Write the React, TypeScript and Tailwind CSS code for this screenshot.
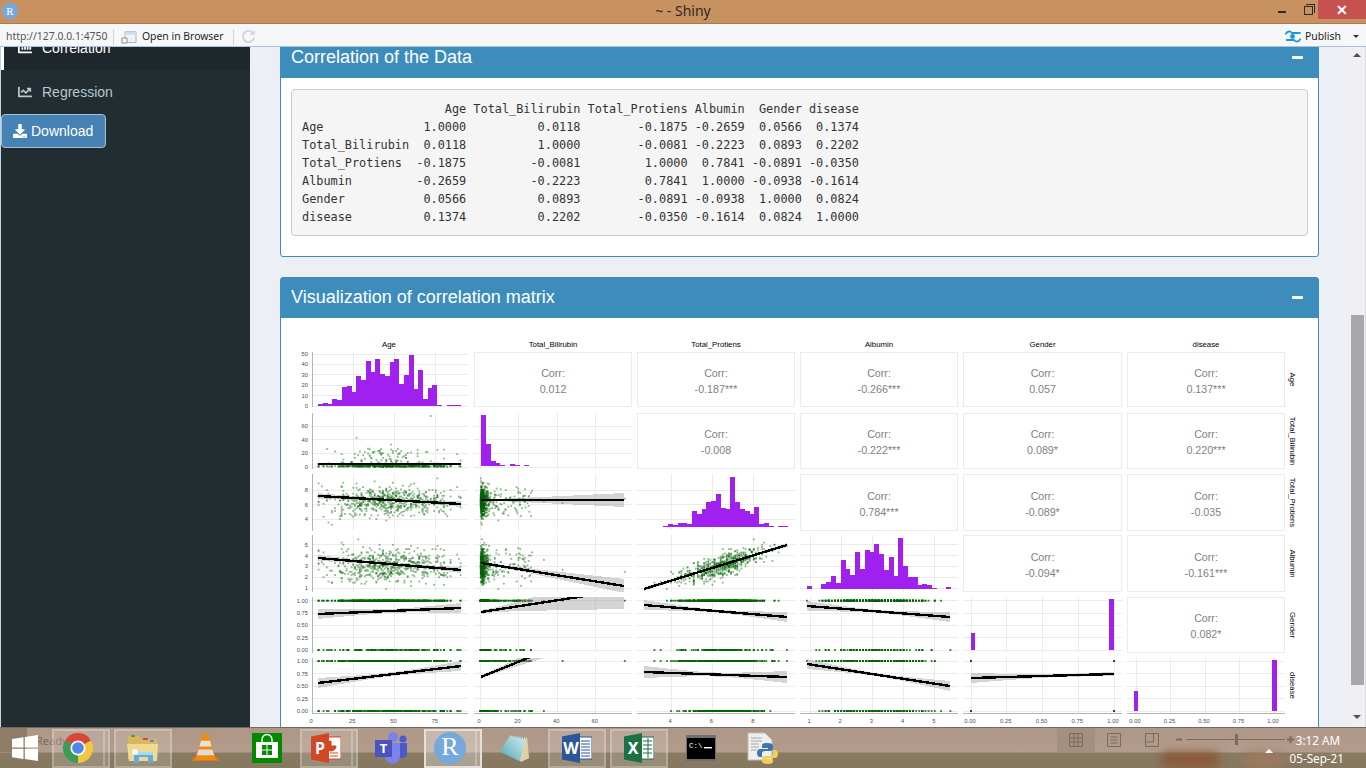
import React from 'react';
import { FaChartBar, FaChartLine, FaDownload } from 'react-icons/fa';

// seeded random so the scatter stays the same between renders
function makeRng(seed: number) {
  let a = seed;
  return () => {
    a = (a + 0x6d2b79f5) | 0;
    let t = Math.imul(a ^ (a >>> 15), 1 | a);
    t = (t + Math.imul(t ^ (t >>> 7), 61 | t)) ^ t;
    return ((t ^ (t >>> 14)) >>> 0) / 4294967296;
  };
}

const rng = makeRng(4750);
const normal = () => Math.sqrt(-2 * Math.log(rng() + 1e-9)) * Math.cos(2 * Math.PI * rng());
const clamp = (v: number, a: number, b: number) => Math.min(b, Math.max(a, v));

const rows: number[][] = [];
for (let i = 0; i < 560; i++) {
  const age = Math.round(clamp(45 + 18 * normal(), 4, 90));
  const spread = rng() < 0.16 ? 3 + rng() * 24 : Math.exp(0.25 + 0.8 * normal());
  const bili = Math.round(clamp(spread, 0.4, 40) * 10) / 10;
  const prot = Math.round(clamp(6.5 + 1.05 * normal(), 2.7, 9.6) * 10) / 10;
  const alb = Math.round(clamp(3.14 + 0.6 * (prot - 6.5) + 0.5 * normal(), 0.9, 5.5) * 10) / 10;
  const gender = rng() < 0.76 ? 1 : 0;
  const disease = rng() < 0.71 ? 1 : 0;
  rows.push([age, bili, prot, alb, gender, disease]);
}
rows.push([72, 75, 6.8, 2.5, 1, 1], [27, 42.8, 6.2, 2.7, 1, 1], [90, 0.7, 7, 3, 1, 1], [28, 1, 8, 5.5, 0, 0]);

type Axis = { lo: number; hi: number; f: (v: number) => number; ticks: [number, string][] };

const cols: Axis[] = [
  { lo: 312, hi: 468, f: (v) => 312 + 1.65 * v, ticks: [[0, '0'], [25, '25'], [50, '50'], [75, '75']] },
  { lo: 474, hi: 632, f: (v) => 480 + 1.93 * v, ticks: [[0, '0'], [20, '20'], [40, '40'], [60, '60']] },
  { lo: 637, hi: 795, f: (v) => 671 + 20.7 * (v - 4), ticks: [[4, '4'], [6, '6'], [8, '8']] },
  { lo: 800, hi: 958, f: (v) => 810 + 31.2 * (v - 1), ticks: [[1, '1'], [2, '2'], [3, '3'], [4, '4'], [5, '5']] },
  { lo: 963, hi: 1122, f: (v) => 971 + 143 * v, ticks: [[0, '0.00'], [0.25, '0.25'], [0.5, '0.50'], [0.75, '0.75'], [1, '1.00']] },
  { lo: 1127, hi: 1285, f: (v) => 1136 + 138 * v, ticks: [[0, '0.00'], [0.25, '0.25'], [0.5, '0.50'], [0.75, '0.75'], [1, '1.00']] },
];

const binTicks: [number, string][] = [[0, '0.00'], [0.25, '0.25'], [0.5, '0.50'], [0.75, '0.75'], [1, '1.00']];

const lines: Axis[] = [
  { lo: 352, hi: 407, f: (v) => 406 - 1.04 * v, ticks: [[0, '0'], [10, '10'], [20, '20'], [30, '30'], [40, '40'], [50, '50']] },
  { lo: 413, hi: 469, f: (v) => 467 - 0.68 * v, ticks: [[0, '0'], [20, '20'], [40, '40'], [60, '60']] },
  { lo: 474, hi: 531, f: (v) => 519 - 7.25 * (v - 4), ticks: [[4, '4'], [6, '6'], [8, '8']] },
  { lo: 535, hi: 592, f: (v) => 588 - 10.8 * (v - 1), ticks: [[1, '1'], [2, '2'], [3, '3'], [4, '4'], [5, '5']] },
  { lo: 597, hi: 653, f: (v) => 650 - 49.3 * v, ticks: binTicks },
  { lo: 658, hi: 713, f: (v) => 711 - 50 * v, ticks: binTicks },
];

const names = ['Age', 'Total_Bilirubin', 'Total_Protiens', 'Albumin', 'Gender', 'disease'];

const corr: Record<string, string> = {
  '1,0': '0.012', '2,0': '-0.187***', '3,0': '-0.266***', '4,0': '0.057', '5,0': '0.137***',
  '2,1': '-0.008', '3,1': '-0.222***', '4,1': '0.089*', '5,1': '0.220***',
  '3,2': '0.784***', '4,2': '-0.089*', '5,2': '-0.035',
  '4,3': '-0.094*', '5,3': '-0.161***',
  '5,4': '0.082*',
};

// col, row, x0, y0, x1, y1, centre of the band, its half width at the centre, left and right
const fits: number[][] = [
  [0, 1, 318, 464, 461, 464, 392, 0.5, 1, 1],
  [0, 2, 318, 496, 461, 504, 392, 1, 3, 3],
  [1, 2, 481, 500, 624, 500, 485, 1, 1, 7],
  [0, 3, 318, 558, 461, 570, 392, 1, 3, 3],
  [1, 3, 481, 563, 624, 586, 485, 1, 1.5, 7],
  [2, 3, 644, 589, 787, 545, 715, 0.6, 2, 2],
  [0, 4, 318, 614, 461, 608, 392, 2, 5, 5],
  [1, 4, 481, 612, 624, 590, 485, 2, 2, 19],
  [2, 4, 644, 605, 787, 617, 715, 1.5, 5, 5],
  [3, 4, 807, 606, 950, 617, 878, 1.5, 5, 5],
  [0, 5, 318, 683, 461, 666, 392, 2, 5, 5],
  [1, 5, 481, 677, 624, 619, 485, 2, 2, 15],
  [2, 5, 644, 672, 787, 677, 715, 2, 6, 6],
  [3, 5, 807, 664, 950, 686, 878, 1.5, 5, 5],
  [4, 5, 971, 678, 1114, 674, 1060, 1.5, 5, 2],
];

const ageBars = [2, 3, 2, 7, 6, 18, 19, 13, 29, 25, 43, 33, 45, 31, 29, 42, 45, 21, 30, 49, 16, 35, 7, 17, 20, 1, 0, 1, 1, 1].map((v) => v * 1.04);
const biliBars = [51, 22, 5, 3, 1, 0, 2, 1, 0, 1];
const protBars = [0, 0, 0, 0, 1, 3, 2, 4, 4, 3, 16, 13, 18, 25, 26, 33, 19, 18, 50, 25, 18, 16, 13, 20, 3, 4, 1, 0, 1, 1];
const albBars = [3, 0, 0, 5, 7, 13, 6, 29, 20, 14, 37, 20, 39, 37, 45, 35, 19, 32, 13, 51, 23, 12, 12, 4, 5, 4, 1, 0, 0, 2];

function Bars({ x, w, bottom, heights }: { x: number; w: number; bottom: number; heights: number[] }) {
  return (
    <g>
      {heights.map((h, i) =>
        h > 0 ? <rect key={i} x={x + i * w} y={bottom - h} width={w + 0.2} height={h} fill="#a020f0" shapeRendering="crispEdges" /> : null
      )}
    </g>
  );
}

function Grid({ c, r }: { c: number; r: number }) {
  const col = cols[c];
  const row = lines[r];
  return (
    <g stroke="#ebebeb" strokeWidth={1} shapeRendering="crispEdges">
      {row.ticks.map(([v]) => (
        <line key={`h${v}`} x1={col.lo} x2={col.hi} y1={row.f(v)} y2={row.f(v)} />
      ))}
      {col.ticks.map(([v]) => (
        <line key={`v${v}`} x1={col.f(v)} x2={col.f(v)} y1={row.lo} y2={row.hi} />
      ))}
    </g>
  );
}

function Fit({ spec }: { spec: number[] }) {
  const [, , x0, y0, x1, y1, cx, m, l, rr] = spec;
  const top: string[] = [];
  const bot: string[] = [];
  for (let i = 0; i <= 24; i++) {
    const x = x0 + ((x1 - x0) * i) / 24;
    const y = y0 + ((y1 - y0) * (x - x0)) / (x1 - x0);
    const edge = x < cx ? l : rr;
    const span = x < cx ? cx - x0 : x1 - cx;
    const t = (x - cx) / span;
    const se = Math.sqrt(m * m + (edge * edge - m * m) * t * t);
    top.push(`${x},${y - se}`);
    bot.unshift(`${x},${y + se}`);
  }
  return (
    <g shapeRendering="crispEdges">
      <polygon points={[...top, ...bot].join(' ')} fill="#999999" fillOpacity={0.42} />
      <line x1={x0} y1={y0} x2={x1} y2={y1} stroke="#000000" strokeWidth={2.4} />
    </g>
  );
}

function Scatter({ c, r }: { c: number; r: number }) {
  return (
    <g fill="#006400" fillOpacity={r >= 4 ? 0.85 : 0.45}>
      {rows.map((d, i) => (
        <rect key={i} x={cols[c].f(d[c]) - 0.9} y={lines[r].f(d[r]) - 0.9} width={1.8} height={1.8} />
      ))}
    </g>
  );
}

function PairsPlot() {
  const cells: React.ReactNode[] = [];
  for (let r = 0; r < 6; r++) {
    for (let c = 0; c < 6; c++) {
      const col = cols[c];
      const row = lines[r];
      const id = `cell-${c}-${r}`;
      if (c > r) {
        const cx = (col.lo + col.hi) / 2;
        const cy = (row.lo + row.hi) / 2;
        cells.push(
          <g key={id}>
            <rect x={col.lo + 0.5} y={row.lo + 0.5} width={col.hi - col.lo - 1} height={row.hi - row.lo - 1} fill="none" stroke="#ebebeb" />
            <text x={cx} y={cy - 3} textAnchor="middle" fontSize={10.7} fill="#7f7f7f">Corr:</text>
            <text x={cx} y={cy + 13} textAnchor="middle" fontSize={10.7} fill="#7f7f7f">{corr[`${c},${r}`]}</text>
          </g>
        );
        continue;
      }
      cells.push(
        <g key={id} clipPath={`url(#${id})`}>
          <clipPath id={id}>
            <rect x={col.lo} y={row.lo} width={col.hi - col.lo} height={row.hi - row.lo} />
          </clipPath>
          <Grid c={c} r={r} />
          {c < r && !(c === 4 && r === 5) && <Scatter c={c} r={r} />}
          {c === 4 && r === 5 && (
            <g fill="#006400">
              <rect x={970} y={660} width={2} height={2} />
              <rect x={1113} y={660} width={2} height={2} />
              <rect x={970} y={710} width={2} height={2} />
              <rect x={1113} y={710} width={2} height={2} />
            </g>
          )}
          {c === 0 && r === 0 && <Bars x={318} w={4.77} bottom={406} heights={ageBars} />}
          {c === 1 && r === 1 && <Bars x={481} w={4.8} bottom={466} heights={biliBars} />}
          {c === 2 && r === 2 && <Bars x={644} w={4.8} bottom={527} heights={protBars} />}
          {c === 3 && r === 3 && <Bars x={807} w={4.8} bottom={589} heights={albBars} />}
          {c === 4 && r === 4 && (
            <g fill="#a020f0">
              <rect x={971} y={633} width={4} height={17} />
              <rect x={1109} y={599} width={5} height={51} />
            </g>
          )}
          {c === 5 && r === 5 && (
            <g fill="#a020f0">
              <rect x={1134} y={691} width={4} height={20} />
              <rect x={1272} y={660} width={5} height={51} />
            </g>
          )}
          {fits.filter((f) => f[0] === c && f[1] === r).map((f, i) => <Fit key={i} spec={f} />)}
        </g>
      );
    }
  }

  return (
    <svg viewBox="281 318 1037 420" width={1037} height={420} className="block">
      {cells}
      {lines.map((row, r) => (
        <g key={r}>
          <line x1={312} x2={312} y1={row.lo} y2={row.hi} stroke="#b3b3b3" strokeWidth={1} shapeRendering="crispEdges" />
          {row.ticks.map(([v, t]) => (
            <text key={t} x={308} y={row.f(v) + 2} textAnchor="end" fontSize={5.8} fill="#4d4d4d">{t}</text>
          ))}
        </g>
      ))}
      {cols.map((col, c) => (
        <g key={c}>
          <line x1={col.lo} x2={col.hi} y1={713.5} y2={713.5} stroke="#b3b3b3" strokeWidth={1} shapeRendering="crispEdges" />
          {col.ticks.map(([v, t]) => (
            <text key={t} x={col.f(v) - 1} y={723} textAnchor="middle" fontSize={5.8} fill="#4d4d4d">{t}</text>
          ))}
          <text x={(col.lo + col.hi) / 2 - (c === 0 ? 1 : 0)} y={346.5} textAnchor="middle" fontSize={7.8} fill="#000000">{names[c]}</text>
        </g>
      ))}
      {lines.map((row, r) => (
        <text
          key={r}
          transform={`translate(1290 ${(row.lo + row.hi) / 2}) rotate(90)`}
          textAnchor="middle"
          fontSize={7.8}
          fill="#000000"
        >
          {names[r]}
        </text>
      ))}
    </svg>
  );
}

const matrix = `                    Age Total_Bilirubin Total_Protiens Albumin  Gender disease
Age              1.0000          0.0118        -0.1875 -0.2659  0.0566  0.1374
Total_Bilirubin  0.0118          1.0000        -0.0081 -0.2223  0.0893  0.2202
Total_Protiens  -0.1875         -0.0081         1.0000  0.7841 -0.0891 -0.0350
Albumin         -0.2659         -0.2223         0.7841  1.0000 -0.0938 -0.1614
Gender           0.0566          0.0893        -0.0891 -0.0938  1.0000  0.0824
disease          0.1374          0.2202        -0.0350 -0.1614  0.0824  1.0000`;

function Box({ title, children }: { title: string; children: React.ReactNode }) {
  return (
    <div className="w-[1039px] shrink-0 rounded-[3px] border border-[#3c8dbc] bg-white">
      <div className="flex h-[40px] items-center justify-between bg-[#3c8dbc] pb-[2px] pl-[10px] pr-[15px] text-[18px] text-white">
        <span>{title}</span>
        <span className="h-[3px] w-[11px] rounded-[1px] bg-white" />
      </div>
      {children}
    </div>
  );
}

function ChromeIcon() {
  return (
    <svg viewBox="0 0 30 30" width={30} height={30}>
      <path d="M15 15L2 7.5A15 15 0 0 1 28 7.5Z" fill="#d8483a" />
      <path d="M15 15L28 7.5A15 15 0 0 1 15 30Z" fill="#f3c63f" />
      <path d="M15 15L15 30A15 15 0 0 1 2 7.5Z" fill="#3a9d57" />
      <circle cx={15} cy={15} r={7.6} fill="#f4f4f4" />
      <circle cx={15} cy={15} r={5.8} fill="#4f86e8" />
    </svg>
  );
}

function FolderIcon() {
  return (
    <svg viewBox="0 0 32 32" width={32} height={32}>
      <path d="M1 4h11l2 3h16v20H1Z" fill="#dcb65c" />
      <rect x={4} y={3} width={4} height={2} fill="#48a54a" />
      <rect x={16} y={6} width={5} height={2} fill="#d8483a" />
      <rect x={23} y={8} width={4} height={2} fill="#4f86e8" />
      <path d="M0 12h31l-1 17H2Z" fill="#efd994" />
      <path d="M7 20h19v11h-5v-6h-9v6H7Z" fill="#5faedb" />
      <path d="M7 20h19v3H7Z" fill="#a9dcf2" />
      <circle cx={8} cy={20} r={3} fill="#ffffff" fillOpacity={0.8} />
    </svg>
  );
}

function VlcIcon() {
  return (
    <svg viewBox="0 0 28 32" width={27} height={31}>
      <path d="M1 25h26l1 4H0Z" fill="#d97a10" />
      <path d="M11 1h6l8 27H3Z" fill="#f08a12" />
      <path d="M9.4 8h9.2l1.8 6H7.6Z" fill="#e8e4dc" />
      <path d="M6.8 17h14.4l1.8 6H5Z" fill="#e0dcd4" />
    </svg>
  );
}

function StoreIcon() {
  return (
    <svg viewBox="0 0 30 30" width={30} height={30}>
      <rect width={30} height={30} fill="#008a00" />
      <path d="M10 9V6.5a5 5 0 0 1 10 0V9" fill="none" stroke="#ffffff" strokeWidth={1.4} />
      <path d="M4 9h22v16H4Z" fill="#ffffff" />
      <rect x={10} y={12} width={4.5} height={4.5} fill="#008a00" />
      <rect x={15.5} y={12} width={4.5} height={4.5} fill="#008a00" />
      <rect x={10} y={17.5} width={4.5} height={4.5} fill="#008a00" />
      <rect x={15.5} y={17.5} width={4.5} height={4.5} fill="#008a00" />
    </svg>
  );
}

function OfficeIcon({ letter, dark, light, page }: { letter: string; dark: string; light: string; page: React.ReactNode }) {
  return (
    <svg viewBox="0 0 30 30" width={30} height={30}>
      <rect x={13} y={4} width={17} height={22} fill="#ffffff" stroke={light} strokeWidth={1} />
      {page}
      <path d="M0 3.5L18 0v30L0 26.5Z" fill={dark} />
      <text x={9} y={21} textAnchor="middle" fontSize={16} fontWeight={700} fill="#ffffff">{letter}</text>
    </svg>
  );
}

function TeamsIcon() {
  return (
    <svg viewBox="0 0 33 32" width={33} height={32}>
      <circle cx={18} cy={5} r={5} fill="#7b83eb" />
      <circle cx={28} cy={7} r={3.5} fill="#4f58ca" />
      <path d="M23 11h9v10a5 5 0 0 1-9 3Z" fill="#4f58ca" />
      <path d="M10 11h15v13a7.5 7.5 0 0 1-15 0Z" fill="#7b83eb" />
      <rect x={0} y={8} width={17} height={17} fill="#4b53bc" />
      <text x={8.5} y={21} textAnchor="middle" fontSize={13} fontWeight={700} fill="#ffffff">T</text>
    </svg>
  );
}

function RIcon({ size, fontSize }: { size: number; fontSize: number }) {
  return (
    <svg viewBox="0 0 32 32" width={size} height={size}>
      <circle cx={16} cy={16} r={16} fill="#75a8dc" />
      <text x={16} y={23} textAnchor="middle" fontSize={fontSize} fill="#ffffff" className="[font-family:'Liberation_Serif',serif]">R</text>
    </svg>
  );
}

function NotepadIcon() {
  return (
    <svg viewBox="0 0 32 32" width={30} height={30}>
      <defs>
        <linearGradient id="pad-cover" x1="0" y1="1" x2="1" y2="0">
          <stop offset="0" stopColor="#4fa6b8" />
          <stop offset="1" stopColor="#d3eef0" />
        </linearGradient>
      </defs>
      <path d="M12 2L29 5L31 27L22 31Z" fill="#ded2ae" />
      <path d="M11 2L27 6L21 30L0 20Z" fill="url(#pad-cover)" />
      <path d="M11 2L27 6" stroke="#8f8f8f" strokeWidth={2} strokeDasharray="1 1" />
    </svg>
  );
}

function CmdIcon() {
  return (
    <svg viewBox="0 0 30 26" width={30} height={26}>
      <rect width={30} height={26} fill="#6f6f70" />
      <rect x={1} y={3} width={28} height={21} fill="#000000" />
      <text x={3} y={13} fontSize={7.5} fill="#ffffff" className="[font-family:'Liberation_Mono',monospace]">C:\</text>
      <rect x={18} y={12} width={8} height={1.4} fill="#ffffff" />
    </svg>
  );
}

function PythonFileIcon() {
  return (
    <svg viewBox="0 0 32 32" width={32} height={32}>
      <path d="M1 1h17l7 7v20H1Z" fill="#eeeeee" stroke="#bdbdbd" />
      <path d="M4 6h11M4 9h11M4 12h8M4 15h8M4 18h6" stroke="#a8a8a8" strokeWidth={1} />
      <path d="M20 11c-4 0-5 1-5 3v2h6v1h-8c-2 0-3 2-3 4s1 4 3 4h2v-3c0-2 1-3 3-3h5c2 0 3-1 3-3v-2c0-2-2-3-6-3Z" fill="#3b78a8" />
      <path d="M21 32c4 0 5-1 5-3v-2h-6v-1h8c2 0 3-2 3-4s-1-4-3-4h-2v3c0 2-1 3-3 3h-5c-2 0-3 1-3 3v2c0 2 2 3 6 3Z" fill="#f0cf52" />
    </svg>
  );
}

function TaskButton({ open, active, split, children }: { open?: boolean; active?: boolean; split?: boolean; children: React.ReactNode }) {
  const look = active
    ? 'border-[#e4dfd8] bg-white/30'
    : open
      ? 'border-white/25 bg-white/15'
      : 'border-transparent';
  return (
    <div className={`relative flex h-[39px] w-[58px] items-center justify-center border-2 ${split ? 'pr-[6px]' : ''} ${look}`}>
      {children}
      {split && <span className="absolute right-[3px] top-0 h-full w-[2px] bg-white/25" />}
    </div>
  );
}

export default function App() {
  return (
    <div className="flex h-[768px] w-[1366px] flex-col overflow-hidden bg-white [font-family:'Liberation_Sans',Arial,sans-serif]">
      {/* window title */}
      <div className="flex h-6 shrink-0 items-start border-b border-[#a67c55] bg-[#c89160] [font-family:'Noto_Sans',sans-serif]">
        <div className="ml-[2px] mt-[3px] w-[16px]">
          <RIcon size={16} fontSize={22} />
        </div>
        <div className="flex-1 pl-[80px] pt-[1px] text-center text-[14px] leading-[20px] text-[#2f2820]">~ - Shiny</div>
        <div className="flex w-[98px] items-start">
          <span className="ml-[10px] mt-[11px] h-[2px] w-[8px] bg-[#2b2b2b]" />
          <span className="relative ml-[18px] mr-[5px] mt-[6px] h-[9px] w-[9px] border border-[#2b2b2b]">
            <span className="absolute -right-[3px] -top-[3px] h-[9px] w-[9px] border-r border-t border-[#2b2b2b]" />
          </span>
          <span className="flex h-[19px] w-[48px] items-center justify-center bg-[#c75050] text-[14px] font-bold leading-none text-white">✕</span>
        </div>
      </div>

      {/* toolbar */}
      <div className="flex h-[23px] shrink-0 items-center border-b border-[#aac2df] bg-[#f6f7f8] pt-[3px] text-[10.4px] text-[#222222] [font-family:'Noto_Sans',sans-serif]">
        <span className="w-[113px] pl-[6px] text-[#555555]">http://127.0.0.1:4750</span>
        <span className="h-[16px] w-px bg-[#d5d5d5]" />
        <svg viewBox="0 0 16 14" width={16} height={14} className="ml-[7px]">
          <path d="M4 1.5h11v11H4Z" fill="#eef3fa" stroke="#a9b6c6" />
          <path d="M4 1.5h11v3H4Z" fill="#cfdced" />
          <path d="M1 8h5v5H1Z" fill="#ffffff" stroke="#8a8a8a" />
        </svg>
        <span className="ml-[5px] w-[91px] whitespace-nowrap text-[#1f1f1f]">Open in Browser</span>
        <span className="h-[16px] w-px bg-[#d5d5d5]" />
        <svg viewBox="0 0 16 16" width={15} height={15} className="ml-[7px]">
          <path d="M13 4.5A6 6 0 1 0 14 9" fill="none" stroke="#ccd5e2" strokeWidth={2} />
          <path d="M9 6h5.5V1Z" fill="#ccd5e2" />
        </svg>
        <svg viewBox="0 0 16 14" width={16} height={14} className="ml-auto">
          <circle cx={7.5} cy={6.5} r={2.4} fill="#1c95dd" />
          <path d="M0.5 4.5C2 1 5 0.5 7 3H15.5M15.5 8.5C14 12 11 12.5 9 10H1" fill="none" stroke="#1c95dd" strokeWidth={1.8} />
        </svg>
        <span className="ml-[4px] w-[48px]">Publish</span>
        <span className="mr-[7px] h-0 w-0 border-x-[3px] border-t-[3px] border-x-transparent border-t-[#333333]" />
      </div>

      {/* app area */}
      <div className="flex min-h-0 flex-1 overflow-hidden">
        <div className="w-[250px] shrink-0 overflow-hidden border-l border-[#c5d3e6] bg-[#222d32] text-[14px]">
          <div className="-mt-[21px] flex h-[44px] items-center gap-[10px] border-l-[3px] border-white bg-[#1e282c] pl-[14px] text-white">
            <FaChartBar className="h-[14px] w-[14px]" />
            <span>Correlation</span>
          </div>
          <div className="flex h-[44px] items-center gap-[10px] border-l-[3px] border-transparent pl-[14px] text-[#b8c7ce]">
            <FaChartLine className="h-[14px] w-[14px]" />
            <span>Regression</span>
          </div>
          <div className="flex h-[34px] w-[105px] items-center gap-[4px] rounded-[4px] border border-[#a9bfd2] bg-[#4682b4] pl-[11px] text-white">
            <FaDownload className="h-[14px] w-[14px]" />
            <span>Download</span>
          </div>
        </div>

        <div className="flex min-w-0 flex-1 flex-col gap-[20px] overflow-hidden bg-[#ecf0f5] pl-[30px]">
          <div className="-mt-[10px]">
            <Box title="Correlation of the Data">
              <div className="px-[10px] pb-[20px] pt-[11px]">
                <pre className="h-[147px] w-[1017px] rounded-[4px] border border-[#cccccc] bg-[#f5f5f5] px-[10px] py-[10px] text-[11.86px] leading-[18px] text-[#333333] [font-family:'DejaVu_Sans_Mono',monospace]">
                  {matrix}
                </pre>
              </div>
            </Box>
          </div>
          <Box title="Visualization of correlation matrix">
            <PairsPlot />
          </Box>
        </div>

        <div className="flex w-[17px] shrink-0 flex-col items-center border-r border-[#d6dce6] bg-[#f0f0f0]">
          <span className="mt-[6px] h-0 w-0 border-x-[4px] border-b-[4px] border-x-transparent border-b-[#505050]" />
          <span className="mt-[258px] h-[370px] w-[13px] bg-[#a8a8a8]" />
          <span className="mt-[30px] h-0 w-0 border-x-[4px] border-t-[4px] border-x-transparent border-t-[#505050]" />
        </div>
      </div>

      {/* taskbar, with the desktop showing through */}
      <div className="relative flex h-[41px] shrink-0 items-center gap-[4px] overflow-hidden border-t border-[#6e6a66] bg-[linear-gradient(#ae9786_0,#b29c8c_24px,#8a7b62_25px,#857860_100%)] pl-[52px] [font-family:'Noto_Sans',sans-serif]">
        <div className="absolute bottom-0 left-[1160px] h-[16px] w-[60px] rounded-full bg-[#8c5a3a] blur-[5px]" />
        <div className="absolute bottom-0 left-[1245px] h-[14px] w-[40px] rounded-full bg-[#a07a5e] blur-[6px]" />
        <div className="absolute left-0 top-0 h-[24px] w-[27px] bg-[#8f7d68]" />
        <span className="absolute left-[36px] top-[5px] text-[11px] text-[#7b6b5f]">Ready</span>
        <div className="absolute left-[12px] top-[7px]">
          <svg viewBox="0 0 26 26" width={26} height={26}>
            <path d="M0 4l11.5-1.7V12.5H0ZM12.8 2.1L26 0V12.5H12.8ZM0 13.8h11.5V24L0 22.3ZM12.8 13.8H26V26L12.8 24Z" fill="#ffffff" />
          </svg>
        </div>
        <TaskButton open split><ChromeIcon /></TaskButton>
        <TaskButton open><FolderIcon /></TaskButton>
        <TaskButton><VlcIcon /></TaskButton>
        <TaskButton><StoreIcon /></TaskButton>
        <TaskButton open split>
          <OfficeIcon letter="P" dark="#d24726" light="#d24726" page={<path d="M20 8a5 5 0 1 0 5 5h-5ZM19 20h8M19 23h8" fill="#d24726" stroke="#d24726" />} />
        </TaskButton>
        <TaskButton><TeamsIcon /></TaskButton>
        <TaskButton active split><RIcon size={32} fontSize={26} /></TaskButton>
        <TaskButton><NotepadIcon /></TaskButton>
        <TaskButton open>
          <OfficeIcon letter="W" dark="#2b579a" light="#2b579a" page={<path d="M19 8h9M19 11h9M19 14h9M19 17h9M19 20h9M19 23h9" stroke="#2b579a" />} />
        </TaskButton>
        <TaskButton open>
          <OfficeIcon letter="X" dark="#1e7145" light="#1e7145" page={<path d="M19 8h9M19 12h9M19 16h9M19 20h9M24 5v20" stroke="#1e7145" />} />
        </TaskButton>
        <TaskButton><CmdIcon /></TaskButton>
        <TaskButton><PythonFileIcon /></TaskButton>

        {/* ghost of a status bar and the clock */}
        <div className="absolute left-[1057px] top-0 h-[24px] w-[38px] bg-[#a59080]" />
        <svg viewBox="0 0 240 24" width={240} height={24} className="absolute left-[1060px] top-0">
          <g fill="none" stroke="#7d6a5c" strokeWidth={1}>
            <path d="M9.5 5.5h13v13h-13ZM9.5 10h13M9.5 14h13M14 5.5v13M18 5.5v13" />
            <path d="M47.5 5.5h13v13h-13ZM50.5 9h7M50.5 12h7M50.5 15h7" />
            <path d="M85.5 5.5h13v13h-13ZM85.5 14h8v-8.5" />
            <path d="M126 11.5h99" />
          </g>
          <rect x={116} y={10.5} width={6} height={2} fill="#7d6a5c" />
          <rect x={175} y={6} width={3} height={11} fill="#7d6a5c" />
          <path d="M227 11.5h7M230.5 8v7" stroke="#7d6a5c" strokeWidth={2} />
        </svg>
        <span className="absolute left-[1265px] top-[21px] h-0 w-0 border-x-[4px] border-b-[4px] border-x-transparent border-b-white" />
        <div className="absolute right-[22px] top-0 flex w-[60px] flex-col items-end text-[11.7px] leading-[18px] text-white">
          <span className="mt-[3px] pr-[4px]">3:12 AM</span>
          <span>05-Sep-21</span>
        </div>
      </div>
    </div>
  );
}
